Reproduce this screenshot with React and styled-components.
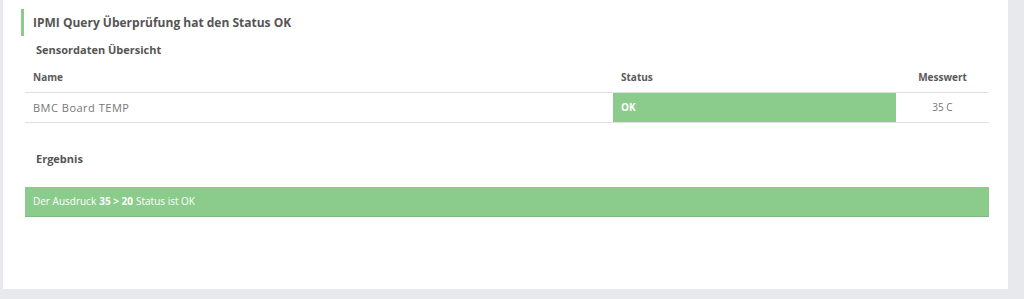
import React from "react";
import styled, { createGlobalStyle } from "styled-components";

const GlobalStyle = createGlobalStyle`
  html, body {
    margin: 0;
    padding: 0;
    background: #e8e9ec;
    font-family: "Open Sans", "Liberation Sans", sans-serif;
  }
`;

const Page = styled.div`
  width: 1024px;
  height: 299px;
  background: #e8e9ec;
  display: flex;
  align-items: flex-start;
`;

const Panel = styled.div`
  margin-left: 3px;
  width: 1005px;
  height: 289px;
  box-sizing: border-box;
  background: #ffffff;
  padding: 9px 19px 0 18px;
`;

const Title = styled.h2`
  margin: 0;
  height: 27px;
  border-left: 3px solid #8bcb8b;
  padding-left: 9px;
  display: flex;
  align-items: center;
  font-size: 12px;
  font-weight: 700;
  color: #555;
`;

const SubTitle = styled.h3`
  margin: 0;
  height: ${(p) => p.h}px;
  box-sizing: border-box;
  padding: ${(p) => p.top || 0}px 0 0 15px;
  display: flex;
  align-items: ${(p) => (p.top ? "flex-start" : "center")};
  font-size: 11px;
  line-height: 14px;
  font-weight: 700;
  color: #555;
`;

const Body = styled.div`
  margin-left: 4px;
`;

const Table = styled.table`
  width: 964px;
  border-collapse: collapse;
  font-size: 10px;
  color: #777;
`;

const Th = styled.th`
  height: 29px;
  padding: 0 8px;
  font-weight: 700;
  color: #5a5a5a;
  text-align: ${(p) => p.align || "left"};
  width: ${(p) => p.w || "auto"};
  border-bottom: 1px solid #dfe0e3;
  vertical-align: middle;
  box-sizing: border-box;
`;

const Td = styled.td`
  height: 30px;
  padding: 0 8px;
  font-size: ${(p) => p.size || 10}px;
  text-align: ${(p) => p.align || "left"};
  letter-spacing: ${(p) => p.spacing || 0}px;
  border-bottom: 1px solid #dfe0e3;
  vertical-align: middle;
  box-sizing: border-box;
  background: ${(p) => (p.ok ? "#8bcb8b" : "transparent")};
  color: ${(p) => (p.ok ? "#fff" : "#777")};
  font-weight: ${(p) => (p.ok ? 700 : 400)};
`;

const Result = styled.div`
  width: 964px;
  height: 30px;
  box-sizing: border-box;
  background: #8bcb8b;
  border-bottom: 1px solid #7fb97f;
  padding-left: 8px;
  display: flex;
  align-items: center;
  font-size: 10px;
  color: #fff;
  b {
    font-weight: 700;
    margin: 0 3px;
  }
`;

const sensors = [{ name: "BMC Board TEMP", status: "OK", value: "35 C" }];

export default function App() {
  return (
    <>
      <GlobalStyle />
      <Page>
        <Panel>
          <Title>IPMI Query Überprüfung hat den Status OK</Title>
          <SubTitle h={27}>Sensordaten Übersicht</SubTitle>
          <Body>
            <Table>
              <thead>
                <tr>
                  <Th w="588px">Name</Th>
                  <Th w="283px">Status</Th>
                  <Th align="center">Messwert</Th>
                </tr>
              </thead>
              <tbody>
                {sensors.map((s) => (
                  <tr key={s.name}>
                    <Td size={11} spacing={0.5}>{s.name}</Td>
                    <Td ok={s.status === "OK"}>{s.status}</Td>
                    <Td align="center">{s.value}</Td>
                  </tr>
                ))}
              </tbody>
            </Table>
          </Body>
          <SubTitle h={64} top={29}>Ergebnis</SubTitle>
          <Body>
            <Result>
              Der Ausdruck<b>35 &gt; 20</b>Status ist OK
            </Result>
          </Body>
        </Panel>
      </Page>
    </>
  );
}
